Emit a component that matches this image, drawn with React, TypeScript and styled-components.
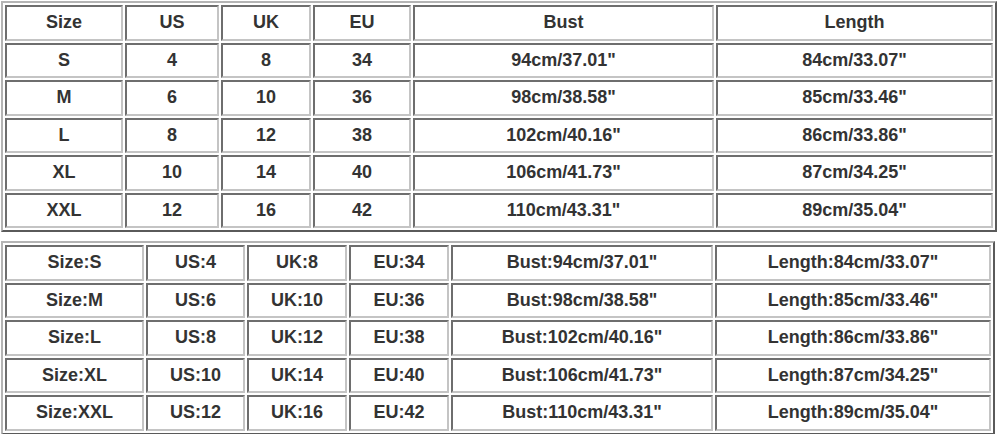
import React from 'react'
import styled, { createGlobalStyle } from 'styled-components';

const GlobalStyle = createGlobalStyle`
    html, body {
        margin: 0;
        padding: 0;
        background: #ffffff;
    }
`;

const Page = styled.div`
    display: flex;
    flex-direction: column;
    align-items: flex-start;
    gap: 9px;
    padding: 1px 0 0 1px;
    font-family: "Liberation Sans", Arial, sans-serif;
`;

const Table = styled.table`
    table-layout: fixed;
    border-collapse: separate;
    border-spacing: 2px;
    border: 2px solid;
    border-color: #b4b4b4 #5a5a5a #5a5a5a #b4b4b4;
    background: #ffffff;
`;

const Col = styled.col<{ $w: number }>`
    width: ${props => props.$w}px;
`;

const Row = styled.tr`
    height: 35.5px;
`;

const Cell = styled.td`
    box-sizing: border-box;
    height: 35.5px;
    padding: 0;
    border: 2px solid;
    border-color: #6e6e6e #c4c4c4 #c4c4c4 #6e6e6e;
    text-align: center;
    vertical-align: middle;
    font-size: 18px;
    font-weight: bold;
    color: #333333;
    white-space: nowrap;
`;

interface ISizeTableProps {
    widths: number[],
    rows: string[][],
}

function SizeTable (props: ISizeTableProps) {
    return <Table>
        <colgroup>
            {props.widths.map((w, i) => <Col key={i} $w={w} />)}
        </colgroup>
        <tbody>
            {props.rows.map((row, r) => <Row key={r}>
                {row.map((txt, c) => <Cell key={c}>{txt}</Cell>)}
            </Row>)}
        </tbody>
    </Table>
}

const sizes = [
    ['S', '4', '8', '34', '94cm/37.01"', '84cm/33.07"'],
    ['M', '6', '10', '36', '98cm/38.58"', '85cm/33.46"'],
    ['L', '8', '12', '38', '102cm/40.16"', '86cm/33.86"'],
    ['XL', '10', '14', '40', '106cm/41.73"', '87cm/34.25"'],
    ['XXL', '12', '16', '42', '110cm/43.31"', '89cm/35.04"'],
];

const topRows = [['Size', 'US', 'UK', 'EU', 'Bust', 'Length'], ...sizes];

const bottomRows = sizes.map(s => [
    'Size:' + s[0], 'US:' + s[1], 'UK:' + s[2], 'EU:' + s[3], 'Bust:' + s[4], 'Length:' + s[5]
]);

export default function App () {
    return <Page>
        <GlobalStyle />
        <SizeTable widths={[118, 94, 90, 98, 301, 277]} rows={topRows} />
        <SizeTable widths={[139, 99, 100, 100, 262, 276]} rows={bottomRows} />
    </Page>
}
